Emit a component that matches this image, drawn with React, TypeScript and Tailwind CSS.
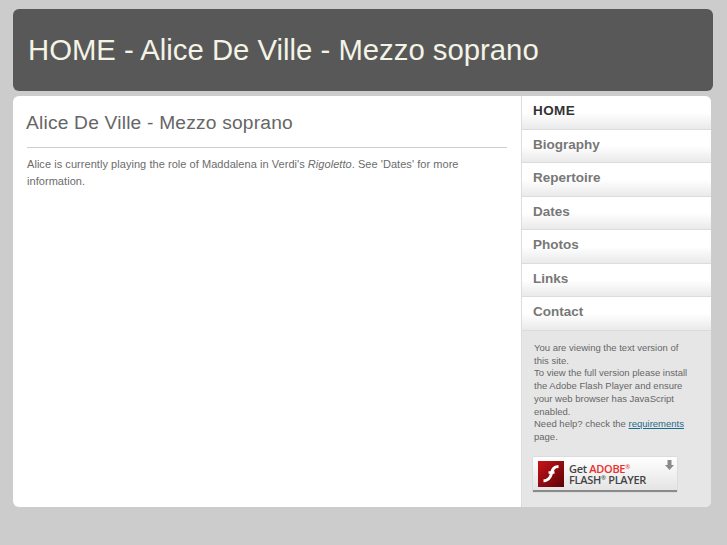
const menuList = ["HOME", "Biography", "Repertoire", "Dates", "Photos", "Links", "Contact"];

const FlashBadge = () => {
  return (
    <div className="relative flex h-[35px] w-[144px] items-center gap-[5px] border-b-2 border-[#8a8a8a] bg-gradient-to-b from-white to-[#e4e4e4] pl-[5px] shadow-[0_0_1px_#aaa]">
      {/* Flash logo */}
      <svg width="26" height="26" viewBox="0 0 26 26" className="shrink-0">
        <defs>
          <linearGradient id="flashRed" x1="0" y1="0" x2="1" y2="1">
            <stop offset="0" stopColor="#c8141a" />
            <stop offset="1" stopColor="#5c0205" />
          </linearGradient>
        </defs>
        <rect width="26" height="26" fill="url(#flashRed)" />
        <path d="M20.500 5.500c-5 0-6 3-7 7s-2.500 7-8 7.500" fill="none" stroke="#fff" strokeWidth="3" />
        <path d="M10.500 11.500h6" stroke="#fff" strokeWidth="2.600" />
      </svg>
      <div className="font-['Open_Sans',sans-serif] text-[11px] leading-[11px] font-semibold tracking-[-0.3px] text-[#444]">
        <div>
          Get <span className="text-[#e8302c]">ADOBE</span>
          <span className="align-top text-[6px] leading-[8px] text-[#e8302c]">®</span>
        </div>
        <div className="whitespace-nowrap">
          FLASH<span className="align-top text-[6px] leading-[8px]">®</span> PLAYER
        </div>
      </div>
      {/* Download arrow */}
      <svg width="9" height="10" viewBox="0 0 9 10" className="absolute top-[3px] right-[3px]">
        <path d="M2.500 0h4v5H9L4.500 10 0 5h2.500z" fill="#8a8a8a" />
      </svg>
    </div>
  );
};

const App = () => {
  return (
    <div className="flex h-[545px] w-[727px] flex-col overflow-hidden bg-[#cccccc] pt-[9px] pl-[13px] font-['Liberation_Sans',sans-serif]">
      {/* Header */}
      <header className="flex h-[82px] w-[700px] shrink-0 items-center rounded-[6px] bg-[#585858] pb-px pl-[15px]">
        <h1 className="text-[29.300px] whitespace-nowrap text-[#f3f3e6]">HOME - Alice De Ville - Mezzo soprano</h1>
      </header>

      <div className="mt-[5px] flex h-[411px] w-[698px] overflow-hidden rounded-[6px] bg-white">
        {/* Main */}
        <main className="w-[508px] shrink-0 pt-[16px] pl-[13px]">
          <h2 className="text-[19.200px] leading-[22px] tracking-[0.2px] text-[#666]">Alice De Ville - Mezzo soprano</h2>
          <hr className="mt-[13px] ml-px w-[480px] border-[#cfcfcf]" />
          <p className="mt-[8px] ml-px w-[470px] text-[11px] leading-[17px] tracking-[0.05px] text-[#6c6c6c]">
            Alice is currently playing the role of Maddalena in Verdi's <em>Rigoletto</em>. See 'Dates' for more information.
          </p>
        </main>

        {/* Sidebar */}
        <aside className="flex-1 border-l border-[#dcdcdc] bg-[#e6e6e6]">
          <nav>
            {menuList.map((label, i) => (
              <div
                key={label}
                className={
                  i === 0
                    ? "flex h-[33.500px] items-center border-b border-[#dcdcdc] bg-gradient-to-b from-white from-50% to-[#eaeaea] pb-[2px] pl-[11px] text-[13.500px] font-bold tracking-[0.4px] text-[#333]"
                    : "flex h-[33.500px] items-center border-b border-[#dcdcdc] bg-gradient-to-b from-white from-50% to-[#eaeaea] pb-[2px] pl-[11px] text-[13.500px] font-bold text-[#777]"
                }
              >
                {label}
              </div>
            ))}
          </nav>
          <div className="px-[11px] pt-[11.500px]">
            <p className="w-[156px] pl-px text-[9.500px] leading-[12.700px] text-[#666]">
              You are viewing the text version of this site.
              <br />
              To view the full version please install the Adobe Flash Player and ensure your web browser has JavaScript enabled.
              <br />
              Need help? check the <a className="text-[#1f6a8a] underline">requirements</a> page.
            </p>
            <div className="mt-[13.500px]">
              <FlashBadge />
            </div>
          </div>
        </aside>
      </div>
    </div>
  );
};

export default App;
